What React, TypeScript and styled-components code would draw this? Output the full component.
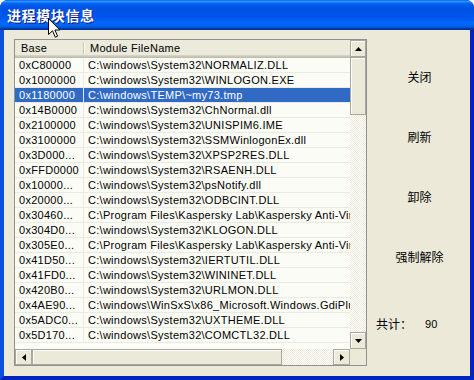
import React from "react";
import styled, { createGlobalStyle } from "styled-components";

const Global = createGlobalStyle`
  html, body { margin: 0; padding: 0; background: #fff; overflow: hidden; }
  #root { width: 474px; height: 380px; }
`;

const Window = styled.div`
  position: relative;
  width: 474px;
  height: 380px;
  display: flex;
  flex-direction: column;
  border-radius: 8px 8px 0 0;
  overflow: hidden;
  background: #0831d9;
`;

const TitleBar = styled.div`
  height: 30px;
  flex: none;
  display: flex;
  align-items: center;
  padding-left: 7px;
  background: linear-gradient(
    to bottom,
    #0058ee 0%, #3593ff 4%, #288eff 6%, #127dff 8%, #036ffc 10%,
    #0262ee 14%, #0057e5 20%, #0054e3 24%, #0055eb 56%, #005bf5 66%,
    #026afe 76%, #0062ef 86%, #0052d6 92%, #0040ab 94%, #003092 100%
  );
`;

const Title = styled.span`
  font-family: "Noto Sans CJK SC", sans-serif;
  font-weight: 700;
  font-size: 14px;
  letter-spacing: 0.6px;
  color: #fff;
  text-shadow: 1px 1px #0a1883;
  margin-top: -1px;
`;

const Body = styled.div`
  flex: 1;
  display: flex;
  background: #ece9d8;
  border-left: 4px solid #0a50dd;
  border-right: 4px solid #0024bd;
  border-bottom: 4px solid #0024bd;
  padding: 9px 0 10px 10px;
`;

const ListView = styled.div`
  width: 353px;
  height: 327px;
  box-sizing: border-box;
  border: 1px solid #8f9095;
  display: grid;
  grid-template-columns: 335px 16px;
  grid-template-rows: 309px 16px;
  background: #fcfcf6;
`;

const Content = styled.div`
  overflow: hidden;
  font-family: "Liberation Sans", Arial, sans-serif;
  font-size: 11px;
  letter-spacing: 0.28px;
  color: #000;
`;

const Header = styled.div`
  display: flex;
  height: 18px;
  background: #ebeadb;
  box-shadow: inset 0 -1px #c1bdae, inset 0 -2px #cbc7b8, inset 0 -3px #d6d2c2;
  white-space: nowrap;
`;

const HeadCell = styled.div<{ $w: number }>`
  width: ${(p) => p.$w}px;
  flex: none;
  box-sizing: border-box;
  padding-left: 6px;
  line-height: 17px;
  position: relative;
  &::after {
    content: "";
    position: absolute;
    right: 0;
    top: 3px;
    bottom: 4px;
    width: 1px;
    background: #c7c5b2;
    box-shadow: 1px 0 #fff;
  }
`;

const Row = styled.div<{ $sel?: boolean }>`
  display: flex;
  height: 15px;
  box-sizing: border-box;
  border-bottom: 1px solid #ebeae2;
  white-space: nowrap;
  background: ${(p) => (p.$sel ? "#316ac5" : "transparent")};
  color: ${(p) => (p.$sel ? "#fff" : "#000")};
`;

const Cell = styled.div<{ $w: number }>`
  width: ${(p) => p.$w}px;
  flex: none;
  box-sizing: border-box;
  padding-left: 4px;
  line-height: 14px;
  overflow: hidden;
  border-right: 1px solid #ebeae2;
`;

const VScroll = styled.div`
  display: flex;
  flex-direction: column;
`;

const HScroll = styled.div`
  display: flex;
`;

const Track = styled.div`
  flex: 1;
  background-color: #fff;
  background-image: repeating-conic-gradient(#ece9d8 0 25%, #ffffff 0 50%);
  background-size: 2px 2px;
`;

const SBButton = styled.div<{ $len: number; $vertical?: boolean }>`
  flex: none;
  ${(p) => (p.$vertical ? `height: ${p.$len}px;` : `width: ${p.$len}px;`)}
  box-sizing: border-box;
  background: #ece9d8;
  border: 1px solid #aca899;
  box-shadow: inset 1px 1px #fff;
  display: flex;
  align-items: center;
  justify-content: center;
`;

const Corner = styled.div`
  background: #ece9d8;
`;

const Side = styled.div`
  flex: 1;
  display: flex;
  flex-direction: column;
  align-items: center;
  padding-top: 26px;
  font-family: "Noto Sans CJK SC", sans-serif;
  font-size: 12px;
  color: #000;
`;

const Btn = styled.div`
  width: 76px;
  height: 24px;
  line-height: 24px;
  text-align: center;
  margin-bottom: 36px;
  margin-left: 2px;
`;

const Count = styled.div`
  margin-top: 10px;
  align-self: flex-start;
  margin-left: 9px;
  display: flex;
  align-items: center;
  gap: 13px;
`;

const CountNum = styled.span`
  font-family: "Liberation Sans", Arial, sans-serif;
  font-size: 11px;
`;

const Cursor = styled.svg`
  position: absolute;
  left: 48px;
  top: 18px;
`;

const Tri = ({ dir }: { dir: "up" | "down" | "left" | "right" }) => {
  const pts = {
    up: "0,4 7,4 3.5,0",
    down: "0,0 7,0 3.5,4",
    left: "4,0 4,7 0,3.5",
    right: "0,0 0,7 4,3.5",
  }[dir];
  const vert = dir === "up" || dir === "down";
  return (
    <svg width={vert ? 7 : 4} height={vert ? 4 : 7} viewBox={vert ? "0 0 7 4" : "0 0 4 7"}>
      <polygon points={pts} fill="#000" />
    </svg>
  );
};

const rows: [string, string][] = [
  ["0xC80000", "C:\\windows\\System32\\NORMALIZ.DLL"],
  ["0x1000000", "C:\\windows\\System32\\WINLOGON.EXE"],
  ["0x1180000", "C:\\windows\\TEMP\\~my73.tmp"],
  ["0x14B0000", "C:\\windows\\System32\\ChNormal.dll"],
  ["0x2100000", "C:\\windows\\System32\\UNISPIM6.IME"],
  ["0x3100000", "C:\\windows\\System32\\SSMWinlogonEx.dll"],
  ["0x3D000...", "C:\\windows\\System32\\XPSP2RES.DLL"],
  ["0xFFD0000", "C:\\windows\\System32\\RSAENH.DLL"],
  ["0x10000...", "C:\\windows\\System32\\psNotify.dll"],
  ["0x20000...", "C:\\windows\\System32\\ODBCINT.DLL"],
  ["0x30460...", "C:\\Program Files\\Kaspersky Lab\\Kaspersky Anti-Virus 6.0\\adialhk.dll"],
  ["0x304D0...", "C:\\windows\\System32\\KLOGON.DLL"],
  ["0x305E0...", "C:\\Program Files\\Kaspersky Lab\\Kaspersky Anti-Virus 6.0\\kloehk.dll"],
  ["0x41D50...", "C:\\windows\\System32\\IERTUTIL.DLL"],
  ["0x41FD0...", "C:\\windows\\System32\\WININET.DLL"],
  ["0x420B0...", "C:\\windows\\System32\\URLMON.DLL"],
  ["0x4AE90...", "C:\\windows\\WinSxS\\x86_Microsoft.Windows.GdiPlus_6595b64144ccf1df"],
  ["0x5ADC0...", "C:\\windows\\System32\\UXTHEME.DLL"],
  ["0x5D170...", "C:\\windows\\System32\\COMCTL32.DLL"],
];

export default function App() {
  return (
    <>
      <Global />
      <Window>
        <TitleBar>
          <Title>进程模块信息</Title>
        </TitleBar>
        <Body>
          <ListView>
            <Content>
              <Header>
                <HeadCell $w={69}>Base</HeadCell>
                <HeadCell $w={400}>Module FileName</HeadCell>
              </Header>
              {rows.map(([b, f], i) => (
                <Row key={i} $sel={i === 2}>
                  <Cell $w={69}>{b}</Cell>
                  <Cell $w={400}>{f}</Cell>
                </Row>
              ))}
            </Content>
            <VScroll>
              <SBButton $vertical $len={17}>
                <Tri dir="up" />
              </SBButton>
              <SBButton $vertical $len={58} />
              <Track />
              <SBButton $vertical $len={17}>
                <Tri dir="down" />
              </SBButton>
            </VScroll>
            <HScroll>
              <SBButton $len={17}>
                <Tri dir="left" />
              </SBButton>
              <SBButton $len={250} />
              <Track />
              <SBButton $len={17}>
                <Tri dir="right" />
              </SBButton>
            </HScroll>
            <Corner />
          </ListView>
          <Side>
            <Btn>关闭</Btn>
            <Btn>刷新</Btn>
            <Btn>卸除</Btn>
            <Btn>强制解除</Btn>
            <Count>
              <span>共计：</span>
              <CountNum>90</CountNum>
            </Count>
          </Side>
        </Body>
        <Cursor width="13" height="21" viewBox="0 0 13 21">
          <path d="M0.5 0.5 L0.5 16.5 L4.5 12.8 L7.3 19.2 L9.6 18.2 L6.9 12 L11.8 12 Z" fill="#fff" stroke="#000" strokeWidth="1" strokeLinejoin="miter" />
        </Cursor>
      </Window>
    </>
  );
}
